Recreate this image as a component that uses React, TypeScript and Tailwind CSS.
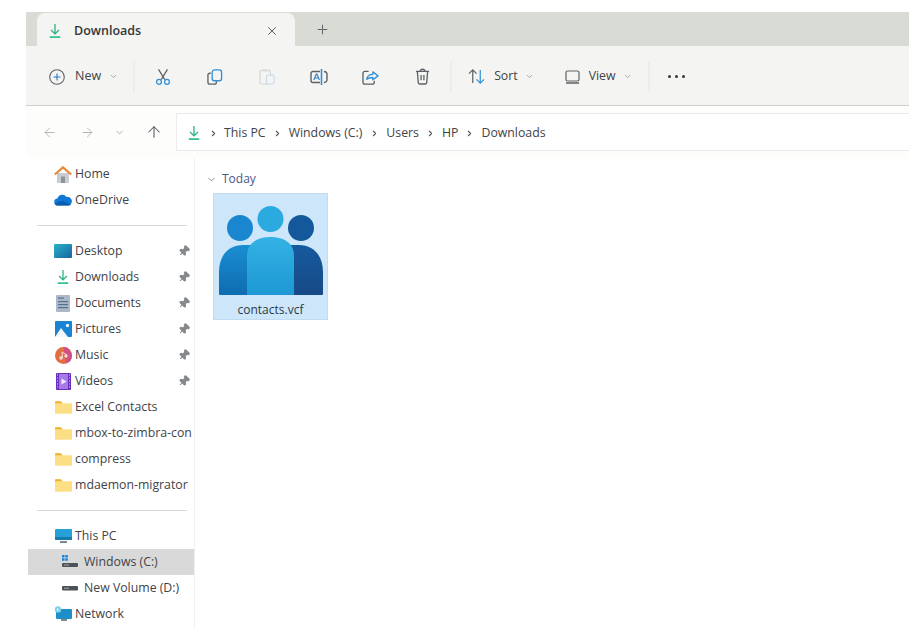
import { ChevronDown, ChevronRight, Plus, X, ArrowLeft, ArrowRight, ArrowUp, Pin } from 'lucide-react';
import type { ReactNode } from 'react';

function DownloadIcon({ className }: { className?: string }) {
  return (
    <svg viewBox="0 0 16 18" className={className} fill="none">
      <path d="M8 1v11M3.5 7.8 8 12.3l4.5-4.5" stroke="#2fb380" strokeWidth="1.5" />
      <path d="M2 16h12" stroke="#35c08c" strokeWidth="2" />
    </svg>
  );
}

function Folder() {
  return (
    <svg viewBox="0 0 18 15" className="h-[15px] w-[17px]">
      <path d="M0 2a1 1 0 0 1 1-1h5l2 2h9a1 1 0 0 1 1 1v9a1 1 0 0 1-1 1H1a1 1 0 0 1-1-1z" fill="#fcdf85" />
      <path d="M0 2a1 1 0 0 1 1-1h5l2 2H0z" fill="#eeb22f" />
    </svg>
  );
}

function Home() {
  return (
    <svg viewBox="0 0 18 17" className="h-[17px] w-[18px]">
      <path d="M3 7h12v10H3z" fill="#c9ccd0" />
      <path d="M7 10.500h4v6.500H7z" fill="#8e9399" />
      <path d="M.8 8.500 9 1.300l8.200 7.200" fill="none" stroke="#e58b3c" strokeWidth="2.200" />
    </svg>
  );
}

function Cloud() {
  return (
    <svg viewBox="0 0 18 12" className="h-[12px] w-[18px]">
      <path d="M4 11.500a3.500 3.500 0 0 1-.5-7A5 5 0 0 1 12.500 3 4.300 4.300 0 0 1 14.500 11.500z" fill="#0f78d4" />
      <path d="M1 10.500c2-3 6-4 9-3l7 3a3 3 0 0 1-2.500 1H4a3.500 3.500 0 0 1-3-1" fill="#0a5eb0" />
    </svg>
  );
}

function Desktop() {
  return (
    <svg viewBox="0 0 18 14" className="h-[14px] w-[18px]">
      <defs>
        <linearGradient id="desk" x1="0" y1="0" x2="1" y2="1">
          <stop offset="0" stopColor="#27b3c9" />
          <stop offset="1" stopColor="#16639f" />
        </linearGradient>
      </defs>
      <rect width="18" height="14" rx="1" fill="url(#desk)" />
    </svg>
  );
}

function Documents() {
  return (
    <svg viewBox="0 0 14 17" className="h-[17px] w-[14px]">
      <rect width="14" height="17" rx="1" fill="#aab8c8" />
      <rect x="2" y="2.500" width="6" height="1.200" fill="#53708f" />
      <rect x="2" y="6" width="10" height="1.200" fill="#53708f" />
      <rect x="2" y="9" width="10" height="1.200" fill="#53708f" />
      <rect x="2" y="12" width="10" height="1.200" fill="#53708f" />
    </svg>
  );
}

function Pictures() {
  return (
    <svg viewBox="0 0 17 16" className="h-[16px] w-[17px]">
      <rect width="17" height="16" rx="1" fill="#1a83d4" />
      <circle cx="12.500" cy="4.500" r="1.700" fill="#e7f3fb" />
      <path d="M0 16 6 7l7 9z" fill="#f2f8fc" />
    </svg>
  );
}

function Music() {
  return (
    <svg viewBox="0 0 17 17" className="h-[17px] w-[17px]">
      <circle cx="8.500" cy="8.500" r="8.500" fill="#e2703f" />
      <path d="M8.500 0a8.500 8.500 0 0 1 8.500 8.500 8.500 8.500 0 0 1-6 8z" fill="#d24f87" />
      <circle cx="6" cy="11" r="1.700" fill="#f8d8dc" />
      <circle cx="11" cy="9" r="1.700" fill="#f8d8dc" />
      <path d="M7.500 11 7 5l5 3" stroke="#f8d8dc" fill="none" />
    </svg>
  );
}

function Videos() {
  return (
    <svg viewBox="0 0 15 17" className="h-[17px] w-[15px]">
      <rect width="15" height="17" rx="1" fill="#6b2fc0" />
      <rect x="3" y="1" width="9" height="15" fill="#a57be8" />
      <path d="M5.500 5.500v6l5-3z" fill="#f3ecff" />
      <path d="M1 2h1M1 5h1M1 8h1M1 11h1M1 14h1M13 2h1M13 5h1M13 8h1M13 11h1M13 14h1" stroke="#e6dafa" />
    </svg>
  );
}

function ThisPC() {
  return (
    <svg viewBox="0 0 17 15" className="h-[15px] w-[17px]">
      <rect width="17" height="11" rx="1" fill="#25a0d8" />
      <path d="M0 8h17v2a1 1 0 0 1-1 1H1a1 1 0 0 1-1-1z" fill="#1879ad" />
      <rect x="5" y="12" width="7" height="2" rx=".5" fill="#7c8790" />
    </svg>
  );
}

function DriveC() {
  return (
    <svg viewBox="0 0 16 15" className="h-[15px] w-[16px]">
      <path d="M0 0h2.500v2.500H0zM3.300 0h2.500v2.500H3.300zM0 3.300h2.500v2.500H0zM3.300 3.300h2.500v2.500H3.300z" fill="#1c7fd6" />
      <rect y="8" width="16" height="4" rx="1" fill="#4d5257" />
      <rect x="2" y="9.500" width="5" height="1" fill="#a3a8ad" />
    </svg>
  );
}

function DriveD() {
  return (
    <svg viewBox="0 0 16 5" className="h-[5px] w-[16px]">
      <rect width="16" height="4.500" rx="1" fill="#4d5257" />
      <rect x="2" y="1.700" width="5" height="1" fill="#a3a8ad" />
    </svg>
  );
}

function Network() {
  return (
    <svg viewBox="0 0 18 16" className="h-[16px] w-[18px]">
      <rect x="2" y="3" width="16" height="10" rx="1" fill="#1c8fc9" />
      <rect x="7" y="13" width="6" height="2" fill="#7c8790" />
      <circle cx="4" cy="3.500" r="3.200" fill="#7ed0ee" />
      <path d="M3 2l2 1.500L3 5z" fill="#f3fbff" />
    </svg>
  );
}

function Cut() {
  return (
    <svg viewBox="0 0 18 20" className="h-[18px] w-[16px]" fill="none" strokeWidth="1.400">
      <path d="M4 1.500 11 13M14 1.500 7 13" stroke="#5d6166" />
      <circle cx="4.500" cy="15.500" r="2.700" stroke="#2f8ed6" />
      <circle cx="13.500" cy="15.500" r="2.700" stroke="#2f8ed6" />
    </svg>
  );
}

function Copy() {
  return (
    <svg viewBox="0 0 17 17" className="h-[16px] w-[16px]" fill="none" strokeWidth="1.400">
      <path d="M4 4.500H3a2 2 0 0 0-2 2V14a2 2 0 0 0 2 2h5a2 2 0 0 0 2-2v-1" stroke="#5d6166" />
      <rect x="5.500" y="1" width="10" height="11.500" rx="2.500" stroke="#2f8ed6" />
    </svg>
  );
}

function Paste() {
  return (
    <svg viewBox="0 0 17 18" className="h-[17px] w-[16px]" fill="none" strokeWidth="1.200">
      <rect x="1" y="2.500" width="11" height="14.500" rx="1.500" stroke="#d3d6d6" />
      <rect x="4" y="1" width="5" height="3" rx="1" fill="#dcdede" />
      <rect x="8" y="7.500" width="8" height="9.500" rx="1.500" stroke="#c9dbea" fill="#f4f5f2" />
    </svg>
  );
}

function Rename() {
  return (
    <svg viewBox="0 0 18 18" className="h-[18px] w-[18px]" fill="none">
      <path d="M10 3.500H3a2 2 0 0 0-2 2v7a2 2 0 0 0 2 2h7M14 3.500a3 3 0 0 1 3 2.500v6a3 3 0 0 1-3 2.500" stroke="#5d6166" strokeWidth="1.400" />
      <path d="M3.800 12 6.300 6h.6l2.500 6M4.800 10h3.600" stroke="#2f7fc4" strokeWidth="1.200" />
      <path d="M11.500 1v16" stroke="#2f8ed6" strokeWidth="1.600" />
    </svg>
  );
}

function Share() {
  return (
    <svg viewBox="0 0 18 17" className="h-[16px] w-[17px]" fill="none" strokeWidth="1.400">
      <path d="M7 2.500H3a2 2 0 0 0-2 2V14a2 2 0 0 0 2 2h8a2 2 0 0 0 2-2v-1.500" stroke="#5d6166" />
      <path d="M5 11c.5-3.500 3-5.300 6.500-5.300V3L17 7.300l-5.500 4.200V9C9 9 6.500 9.500 5 11z" stroke="#2f8ed6" strokeLinejoin="round" />
    </svg>
  );
}

function Trash() {
  return (
    <svg viewBox="0 0 16 18" className="h-[17px] w-[15px]" fill="none" stroke="#5d6166" strokeWidth="1.400">
      <path d="M1 3.500h14M5.500 3.500c0-3 5-3 5 0M2.500 3.500l1 12a1.500 1.500 0 0 0 1.500 1.500h6a1.500 1.500 0 0 0 1.500-1.500l1-12M6.500 7.500v5.500M9.500 7.500v5.500" />
    </svg>
  );
}

function Sort() {
  return (
    <svg viewBox="0 0 18 16" className="h-[15px] w-[17px]" fill="none" strokeWidth="1.300">
      <path d="M5 15V1M1 5l4-4 4 4" stroke="#5d6166" />
      <path d="M13 1v14M9 11l4 4 4-4" stroke="#2f8ed6" />
    </svg>
  );
}

function View() {
  return (
    <svg viewBox="0 0 15 14" className="h-[14px] w-[15px]" fill="none" stroke="#5d6166" strokeWidth="1.200">
      <rect x="1" y="1" width="13" height="10" rx="1.500" />
      <path d="M1 13h13" strokeWidth="1.500" />
    </svg>
  );
}

function ToolBtn({ children, className }: { children: ReactNode; className?: string }) {
  return <div className={`flex h-5 w-[18px] items-center justify-center ${className ?? ''}`}>{children}</div>;
}

function NavRow({ icon, label, pinned, active, indent }: { icon: ReactNode; label: string; pinned?: boolean; active?: boolean; indent?: boolean }) {
  return (
    <div className={`flex h-[26px] items-center overflow-hidden ${active ? 'bg-[#d9d9d9]' : ''} ${indent ? 'pl-[33px]' : 'pl-[26px]'}`}>
      <div className="mr-[3px] flex w-[18px] shrink-0 items-center justify-center">{icon}</div>
      <span className={`whitespace-nowrap text-[12.3px] text-[#3f4347] ${indent ? 'ml-[2px]' : ''}`}>{label}</span>
      {pinned && <Pin className="ml-auto mr-[4px] h-3 w-3 rotate-45 fill-[#85888b] text-[#85888b]" />}
    </div>
  );
}

const Sep = () => <div className="ml-[9px] h-[1px] w-[150px] bg-[#d8d8d8]" />;

export default function App() {
  return (
    <div className="flex h-[637px] w-[913px] flex-col overflow-hidden bg-white pb-[7px] pl-[26px] pr-[4px] pt-[12px] font-['Open_Sans','Noto_Sans',sans-serif] text-[#3f4347]">
      {/* tab strip */}
      <div className="flex h-[34px] shrink-0 items-end bg-[#d9dbd5] pl-[11px]">
        <div className="flex h-[33px] w-[258px] items-center rounded-t-[8px] bg-[#f4f5f2] pl-[11px] pr-[16px] pt-[3px]">
          <DownloadIcon className="h-[16px] w-[14px]" />
          <span className="ml-[12px] text-[12.5px] font-semibold text-[#33373a]">Downloads</span>
          <X className="ml-auto h-[14px] w-[14px] text-[#53575a]" strokeWidth={1.6} />
        </div>
        <Plus className="mb-[9px] ml-[20px] h-[15px] w-[15px] text-[#62666a]" strokeWidth={1.6} />
      </div>

      {/* command bar */}
      <div className="flex h-[60px] shrink-0 items-center border-b-[1.500px] border-[#cfd0ce] bg-[#f4f5f2] pl-[23px] pt-[2px]">
        <svg viewBox="0 0 16 16" className="h-[16px] w-[16px]" fill="none" strokeWidth="1.100">
          <circle cx="8" cy="8" r="7.300" stroke="#5d6166" />
          <path d="M8 4.500v7M4.500 8h7" stroke="#2778bd" />
        </svg>
        <span className="ml-[10px] text-[12.5px] font-medium text-[#3f4347]">New</span>
        <ChevronDown className="ml-[8px] h-[9px] w-[9px] text-[#8e9194]" />
        <div className="ml-[15px] h-[30px] w-[2px] bg-[#ecedea]" />
        <ToolBtn className="ml-[19px]"><Cut /></ToolBtn>
        <ToolBtn className="ml-[34px]"><Copy /></ToolBtn>
        <ToolBtn className="ml-[34px]"><Paste /></ToolBtn>
        <ToolBtn className="ml-[34px]"><Rename /></ToolBtn>
        <ToolBtn className="ml-[33px]"><Share /></ToolBtn>
        <ToolBtn className="ml-[34px]"><Trash /></ToolBtn>
        <div className="ml-[19px] h-[30px] w-[2px] bg-[#ecedea]" />
        <div className="ml-[16px]"><Sort /></div>
        <span className="ml-[9px] text-[12.3px] text-[#3f4347]">Sort</span>
        <ChevronDown className="ml-[7px] h-[9px] w-[9px] text-[#8e9194]" />
        <div className="ml-[31px]"><View /></div>
        <span className="ml-[9px] text-[12.3px] text-[#3f4347]">View</span>
        <ChevronDown className="ml-[7px] h-[9px] w-[9px] text-[#8e9194]" />
        <div className="ml-[16px] h-[30px] w-[2px] bg-[#ecedea]" />
        <div className="ml-[18px] flex gap-[3.500px]">
          <span className="h-[3.500px] w-[3.500px] rounded-full bg-[#33373a]" />
          <span className="h-[3.500px] w-[3.500px] rounded-full bg-[#33373a]" />
          <span className="h-[3.500px] w-[3.500px] rounded-full bg-[#33373a]" />
        </div>
      </div>

      {/* address row */}
      <div className="flex h-[52px] shrink-0 items-center bg-[#fdfdfc] pl-[16px]">
        <ArrowLeft className="h-[15px] w-[15px] text-[#a5a7a9]" strokeWidth={1.3} />
        <ArrowRight className="ml-[23px] h-[15px] w-[15px] text-[#a5a7a9]" strokeWidth={1.3} />
        <ChevronDown className="ml-[19px] h-[11px] w-[11px] text-[#a5a7a9]" />
        <ArrowUp className="ml-[20px] h-[18px] w-[18px] text-[#55595c]" strokeWidth={1.4} />
        <div className="ml-[13px] flex h-[38px] flex-1 items-center border-y border-l border-[#ebecea] bg-white pl-[10px] pt-[2px]">
          <DownloadIcon className="h-[16px] w-[14px]" />
          <ChevronRight className="ml-[8px] h-[9px] w-[9px] text-[#55595c]" strokeWidth={3} />
          <span className="ml-[6px] text-[12.3px]">This PC</span>
          <ChevronRight className="ml-[7px] h-[9px] w-[9px] text-[#55595c]" strokeWidth={3} />
          <span className="ml-[7px] text-[12.3px]">Windows (C:)</span>
          <ChevronRight className="ml-[8px] h-[9px] w-[9px] text-[#55595c]" strokeWidth={3} />
          <span className="ml-[7px] text-[12.3px]">Users</span>
          <ChevronRight className="ml-[7px] h-[9px] w-[9px] text-[#55595c]" strokeWidth={3} />
          <span className="ml-[7px] text-[12.3px]">HP</span>
          <ChevronRight className="ml-[7px] h-[9px] w-[9px] text-[#55595c]" strokeWidth={3} />
          <span className="ml-[7px] text-[12.3px]">Downloads</span>
        </div>
      </div>

      {/* body */}
      <div className="flex min-h-0 flex-1">
        <nav className="w-[169px] shrink-0 border-r border-[#f1f1f1] pl-[2px] pt-[3px]">
          <NavRow icon={<Home />} label="Home" />
          <NavRow icon={<Cloud />} label="OneDrive" />
          <div className="py-[12px]"><Sep /></div>
          <NavRow icon={<Desktop />} label="Desktop" pinned />
          <NavRow icon={<DownloadIcon className="h-[16px] w-[14px]" />} label="Downloads" pinned />
          <NavRow icon={<Documents />} label="Documents" pinned />
          <NavRow icon={<Pictures />} label="Pictures" pinned />
          <NavRow icon={<Music />} label="Music" pinned />
          <NavRow icon={<Videos />} label="Videos" pinned />
          <NavRow icon={<Folder />} label="Excel Contacts" />
          <NavRow icon={<Folder />} label="mbox-to-zimbra-con" />
          <NavRow icon={<Folder />} label="compress" />
          <NavRow icon={<Folder />} label="mdaemon-migrator" />
          <div className="py-[12px]"><Sep /></div>
          <NavRow icon={<ThisPC />} label="This PC" />
          <NavRow icon={<DriveC />} label="Windows (C:)" active indent />
          <NavRow icon={<DriveD />} label="New Volume (D:)" indent />
          <NavRow icon={<Network />} label="Network" />
        </nav>

        <main className="flex-1 pl-[11px] pt-[12px]">
          <div className="flex items-center">
            <ChevronDown className="h-[11px] w-[11px] text-[#7f8387]" />
            <span className="ml-[5px] text-[12px] text-[#4a5590]">Today</span>
          </div>
          <div className="ml-[7px] mt-[5px] flex h-[127px] w-[115px] flex-col items-center border border-[#c0dcf3] bg-[#cde6fa]">
            <svg viewBox="0 0 104 90" className="mt-[12px] h-[90px] w-[104px] shrink-0">
              <defs>
                <linearGradient id="l" x1="0" y1="0" x2="0" y2="1">
                  <stop offset="0" stopColor="#1a8ed2" />
                  <stop offset="1" stopColor="#0f6cb0" />
                </linearGradient>
                <linearGradient id="r" x1="0" y1="0" x2="0" y2="1">
                  <stop offset="0" stopColor="#155a9e" />
                  <stop offset="1" stopColor="#174a85" />
                </linearGradient>
                <linearGradient id="m" x1="0" y1="0" x2="0" y2="1">
                  <stop offset="0" stopColor="#34b2e4" />
                  <stop offset="1" stopColor="#1d98d4" />
                </linearGradient>
              </defs>
              <circle cx="21" cy="22" r="13" fill="#1a86cf" />
              <circle cx="82" cy="22" r="13" fill="#14589c" />
              <circle cx="51.500" cy="13" r="13" fill="#2aaadf" />
              <path d="M0 86V66c0-16 9-27 24-27h12v50H2a2 2 0 0 1-2-3z" fill="url(#l)" />
              <path d="M104 86V66c0-16-9-27-24-27H68v50h34a2 2 0 0 0 2-3z" fill="url(#r)" />
              <path d="M28 89V50c0-13 10-19 23.500-19S75 37 75 50v39z" fill="url(#m)" />
            </svg>
            <span className="mt-[5px] text-[12px] text-[#2b3a47]">contacts.vcf</span>
          </div>
        </main>
      </div>
    </div>
  );
}
